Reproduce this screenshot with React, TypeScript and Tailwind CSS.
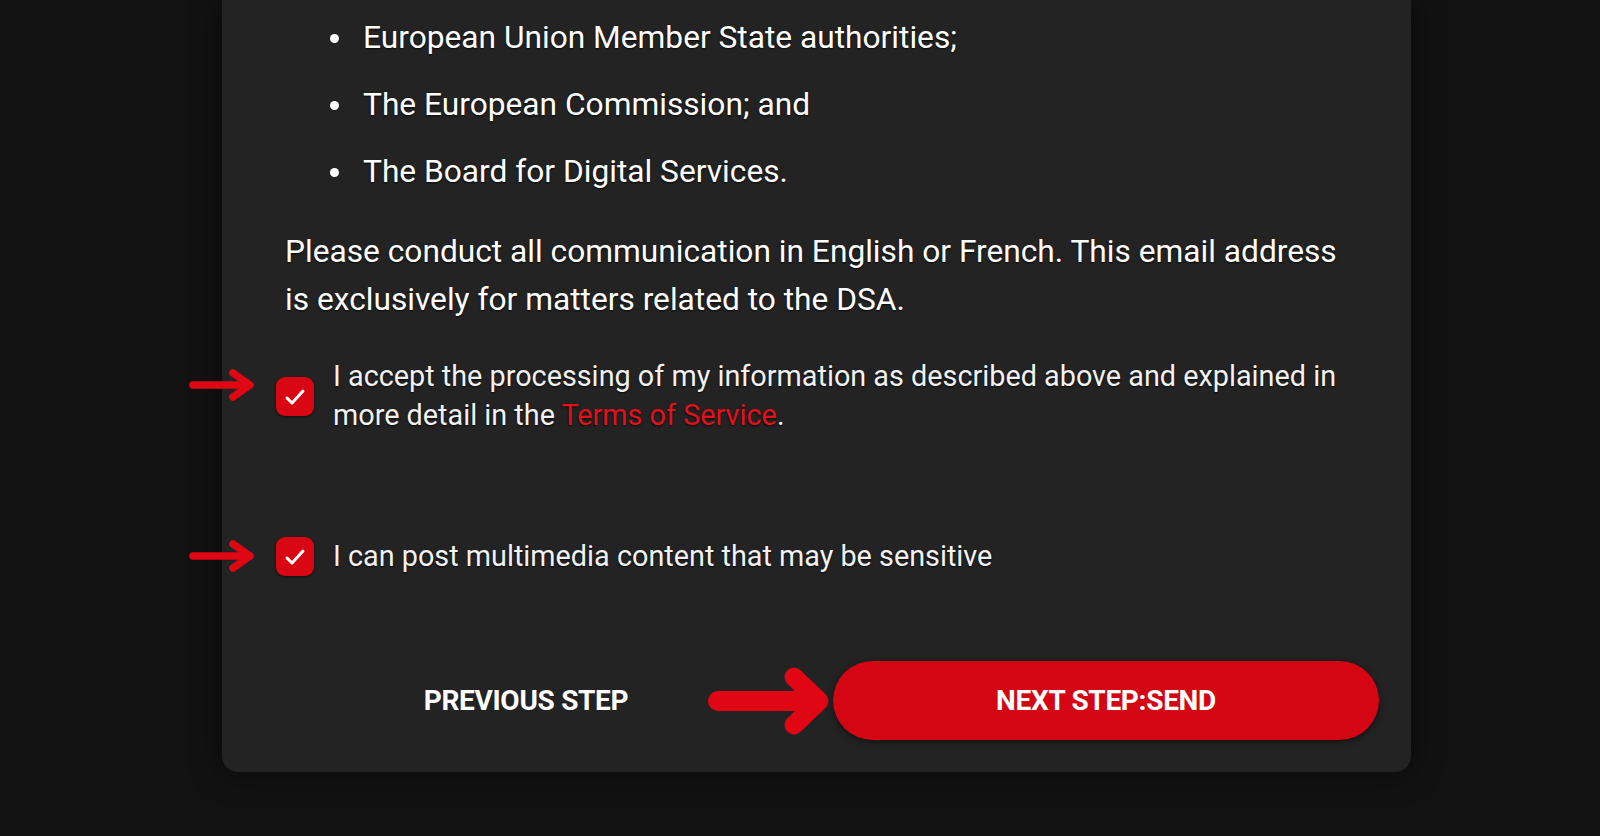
import React from 'react';

const font = { fontFamily: 'Roboto, "Liberation Sans", sans-serif' };

// small red pointer arrows that sit in front of the checkboxes
const SmallArrow: React.FC<{ className?: string }> = ({ className }) => (
    <svg className={className} width="66" height="32" viewBox="0 0 66 32" fill="none">
        <path d="M4 16 H58" stroke="#e00613" strokeWidth="7.5" strokeLinecap="round" />
        <path d="M44 4 L61 16 L44 28" stroke="#e00613" strokeWidth="7.5" strokeLinecap="round" strokeLinejoin="round" />
    </svg>
);

const BigArrow: React.FC<{ className?: string }> = ({ className }) => (
    <svg className={className} width="122" height="70" viewBox="0 0 122 70" fill="none">
        <path d="M11 35 H108" stroke="#e00613" strokeWidth="20" strokeLinecap="round" />
        <path d="M87 11 L112 35 L87 59" stroke="#e00613" strokeWidth="19" strokeLinecap="round" strokeLinejoin="round" />
    </svg>
);

const CheckBox: React.FC = () => (
    <div className="h-[39px] w-[38px] shrink-0 rounded-[9px] bg-[#d90614] shadow-[0_1px_3px_rgba(0,0,0,0.6)]">
        <svg width="38" height="39" viewBox="0 0 38 39" fill="none">
            <path d="M11 21 L16 26 L27 14" stroke="#fff" strokeWidth="3" strokeLinecap="round" strokeLinejoin="round" />
        </svg>
    </div>
);

const bullets = ['European Union Member State authorities;', 'The European Commission; and', 'The Board for Digital Services.'];

const App: React.FC = () => {
    return (
        <div className="h-[836px] w-full overflow-hidden bg-[#121212] text-white" style={font}>
            <div className="relative ml-[222px] w-[1189px] rounded-b-[16px] bg-[#232323] px-[63px] pt-[18px] pb-[32px] shadow-[0_0_30px_rgba(0,0,0,0.5)] [text-shadow:0_1px_2px_rgba(0,0,0,0.8)]">
                <ul className="flex flex-col gap-[27px] pl-[45px]">
                    {bullets.map((b) => (
                        <li key={b} className="flex items-center text-[31.7px] leading-[40px]">
                            <span className="mr-[24px] inline-block h-[9px] w-[9px] rounded-full bg-white" />
                            {b}
                        </li>
                    ))}
                </ul>

                <p className="mt-[36px] text-[31.7px] leading-[48px]">
                    Please conduct all communication in English or French. This email address is exclusively for matters related to the DSA.
                </p>

                <div className="relative mt-[33px] -ml-[9px] flex items-center gap-[19px]">
                    <SmallArrow className="absolute -left-[87px] top-[12px]" />
                    <CheckBox />
                    <p className="text-[28.8px] leading-[39px] text-[#f2f2f2]">
                        I accept the processing of my information as described above and explained in more detail in the{' '}
                        <span className="text-[#e3111c]">Terms of Service</span>.
                    </p>
                </div>

                <div className="relative mt-[101px] -ml-[9px] flex items-center gap-[19px]">
                    <SmallArrow className="absolute -left-[87px] top-[4px]" />
                    <CheckBox />
                    <p className="text-[28.8px] leading-[40px] text-[#f2f2f2]">I can post multimedia content that may be sensitive</p>
                </div>

                <div className="mt-[85px] flex items-center">
                    <button className="ml-[116px] w-[250px] shrink-0 text-center text-[28px] font-bold uppercase leading-[40px] tracking-[-0.3px] text-white">
                        Previous Step
                    </button>
                    <BigArrow className="ml-[56px] shrink-0" />
                    <button className="ml-[4px] h-[79px] w-[546px] shrink-0 rounded-full bg-[#d40613] text-[28px] font-bold uppercase tracking-[-0.3px] text-white shadow-[0_2px_6px_rgba(0,0,0,0.5)]">
                        Next Step:Send
                    </button>
                </div>
            </div>
        </div>
    );
};

export default App;
